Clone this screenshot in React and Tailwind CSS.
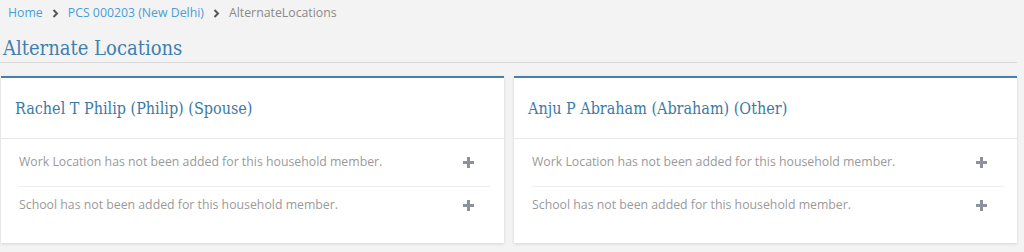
import React from "react";

const Chevron = () => (
  <svg width="7" height="9" viewBox="0 0 7 9" className="mx-[9px]">
    <path d="M1.5 1 L5 4.5 L1.5 8" fill="none" stroke="#555" strokeWidth="2" />
  </svg>
);

const Plus = () => (
  <svg width="11" height="11" viewBox="0 0 11 11">
    <rect x="4" y="0" width="3" height="11" fill="#8b9299" />
    <rect x="0" y="4" width="11" height="3" fill="#8b9299" />
  </svg>
);

const Card = ({ name }) => (
  <div className="flex-1 bg-white border-t-2 border-[#4a7fa8] shadow-[0_1px_3px_rgba(0,0,0,0.13)] h-[167px]">
    <div className="h-[61px] flex items-center px-[14px] pt-[1px] border-b border-[#e8e8e8]">
      <span className="text-[16px] text-[#3a7aa8]" style={{ fontFamily: '"DejaVu Serif Condensed", "DejaVu Serif", serif' }}>
        {name}
      </span>
    </div>
    <div className="pl-[18px] pr-[13px] pt-[14px]">
      <div className="flex items-center justify-between h-[18px] pr-[17px]">
        <span>Work Location has not been added for this household member.</span>
        <Plus />
      </div>
      <div className="mt-[15px] border-t border-[#efefef] pt-[9px]">
        <div className="flex items-center justify-between h-[18px] pr-[17px]">
          <span>School has not been added for this household member.</span>
          <Plus />
        </div>
      </div>
    </div>
  </div>
);

export default function App() {
  return (
    <div className="w-[1024px] h-[252px] bg-[#f3f3f3] text-[12.3px] text-[#9a9a9a]" style={{ fontFamily: '"Open Sans", sans-serif' }}>
      <div className="flex items-center h-[25px] pl-[8px] pt-[1px]">
        <span className="text-[#4a9ed9]">Home</span>
        <Chevron />
        <span className="text-[#4a9ed9]">PCS 000203 (New Delhi)</span>
        <Chevron />
        <span className="text-[#8a8a8a]">AlternateLocations</span>
      </div>
      <div className="w-[1017px] border-b border-[#d9d9d9] h-[38px] flex items-center pl-[3px] pt-[9px]">
        <span className="text-[20px] text-[#3f80af] leading-none" style={{ fontFamily: '"DejaVu Serif Condensed", "DejaVu Serif", serif' }}>
          Alternate Locations
        </span>
      </div>
      <div className="flex gap-[10px] pl-[1px] w-[1017px] mt-[13px]">
        <Card name="Rachel T Philip (Philip) (Spouse)" />
        <Card name="Anju P Abraham (Abraham) (Other)" />
      </div>
    </div>
  );
}
